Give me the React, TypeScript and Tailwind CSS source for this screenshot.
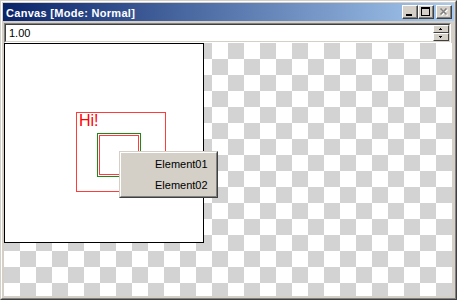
const FONT = { fontFamily: '"Liberation Sans", Arial, sans-serif' };

function CaptionButton({ children, className = '' }: { children: React.ReactNode; className?: string }) {
  return (
    <div
      className={`w-[16px] h-[14px] bg-[#d4d0c8] border border-t-white border-l-white border-r-[#404040] border-b-[#404040] ${className}`}
    >
      <div className="w-full h-full border-r border-b border-[#808080]">
        <svg width="14" height="12" viewBox="0 0 14 12" shapeRendering="crispEdges" className="block">
          {children}
        </svg>
      </div>
    </div>
  );
}

function SpinButton({ up }: { up: boolean }) {
  return (
    <div className="w-[16px] h-[8px] bg-[#d4d0c8] border border-t-white border-l-white border-r-[#404040] border-b-[#404040]">
      <svg width="14" height="6" viewBox="0 0 14 6" shapeRendering="crispEdges" className="block">
        {up ? (
          <>
            <rect x="6" y="2" width="1" height="1" fill="#000" />
            <rect x="5" y="3" width="3" height="1" fill="#000" />
          </>
        ) : (
          <>
            <rect x="5" y="2" width="3" height="1" fill="#000" />
            <rect x="6" y="3" width="1" height="1" fill="#000" />
          </>
        )}
      </svg>
    </div>
  );
}

function TitleBar() {
  return (
    <div className="h-[18px] flex items-start bg-[linear-gradient(to_right,#0a246a,#a6caf0)]">
      <span className="flex-1 pl-[3px] pt-[1px] leading-[18px] text-[11px] font-bold text-white tracking-[0.3px]" style={FONT}>
        Canvas [Mode: Normal]
      </span>
      <div className="flex mt-[2px] mr-[2px]">
        <CaptionButton>
          <rect x="3" y="8" width="6" height="2" fill="#000" />
        </CaptionButton>
        <CaptionButton>
          <rect x="2" y="1" width="9" height="2" fill="#000" />
          <rect x="2" y="3" width="1" height="7" fill="#000" />
          <rect x="10" y="3" width="1" height="7" fill="#000" />
          <rect x="2" y="9" width="9" height="1" fill="#000" />
        </CaptionButton>
        <CaptionButton className="ml-[2px]">
          <path d="M4.5 3.5 L10.5 9.5 M10.5 3.5 L4.5 9.5" stroke="#fff" strokeWidth="1.6" shapeRendering="auto" />
          <path d="M3.5 2.5 L9.5 8.5 M9.5 2.5 L3.5 8.5" stroke="#808080" strokeWidth="1.6" shapeRendering="auto" />
        </CaptionButton>
      </div>
    </div>
  );
}

function ValueField() {
  return (
    <div className="h-[20px] mt-[2px] ml-[1px] mr-[3px] border border-t-[#808080] border-l-[#808080] border-r-white border-b-white">
      <div className="h-full flex items-center bg-white border border-t-[#404040] border-l-[#404040] border-r-[#d4d0c8] border-b-[#d4d0c8]">
        <span className="flex-1 pl-[3px] text-[11px] text-black" style={FONT}>
          1.00
        </span>
        <div className="flex flex-col">
          <SpinButton up />
          <SpinButton up={false} />
        </div>
      </div>
    </div>
  );
}

function Drawing() {
  return (
    <div className="relative w-[200px] h-[200px] bg-white border border-black">
      <div className="absolute left-[71px] top-[68px] w-[90px] h-[80px] border border-[#ff3c3c]">
        <span className="absolute left-[2px] top-0 text-[16px] leading-none text-[#ff0000]" style={FONT}>
          Hi!
        </span>
      </div>
      <div className="absolute left-[92px] top-[89px] w-[44px] h-[44px] border border-[#1a8a1a]" />
      <div className="absolute left-[94px] top-[91px] w-[40px] h-[40px] border border-[#ff3c3c]" />
    </div>
  );
}

function ContextMenu() {
  return (
    <div className="absolute left-[118px] top-[150px] w-[99px] bg-[#d4d0c8] border border-t-[#d4d0c8] border-l-[#d4d0c8] border-r-[#404040] border-b-[#404040]">
      <div className="border border-t-white border-l-white border-r-[#808080] border-b-[#808080] pt-[1px]">
        {['Element01', 'Element02'].map((label) => (
          <div key={label} className="h-[21px] leading-[21px] pl-[34px] text-[11px] text-black" style={FONT}>
            {label}
          </div>
        ))}
      </div>
    </div>
  );
}

export default function App() {
  return (
    <div className="relative w-[457px] h-[300px] bg-[#d4d0c8] border border-t-[#d4d0c8] border-l-[#d4d0c8] border-r-[#404040] border-b-[#404040]">
      <div className="w-full h-full flex flex-col p-[1px] border border-t-white border-l-white border-r-[#808080] border-b-[#808080]">
        <TitleBar />
        <ValueField />
        <div className="flex-1 ml-[1px] mr-[2px] mb-[1px] bg-[image:conic-gradient(white_25%,#d3d3d3_0_50%,white_0_75%,#d3d3d3_0)] bg-[length:32px_32px]">
          <Drawing />
        </div>
      </div>
      <ContextMenu />
    </div>
  );
}
